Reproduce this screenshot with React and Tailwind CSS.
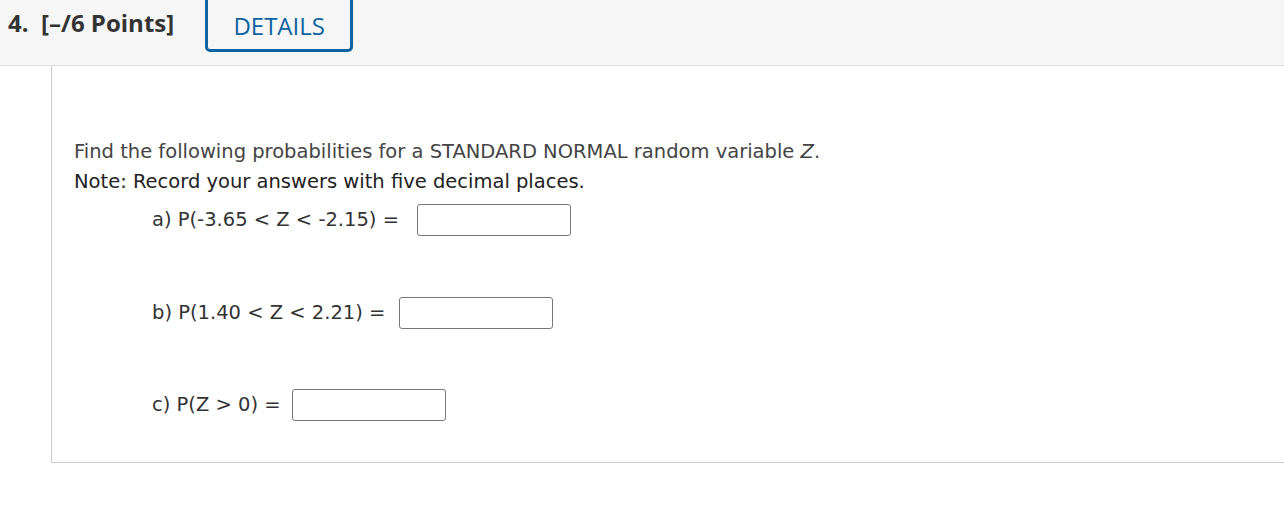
import React from "react";

const rows = [
  { label: "a) P(-3.65 < Z < -2.15) =", gap: "mt-[7px] gap-[18px]" },
  { label: "b) P(1.40 < Z < 2.21) =", gap: "mt-[61px] gap-[14px]" },
  { label: "c) P(Z > 0) =", gap: "mt-[60px] gap-[11px]" },
];

export default function App() {
  return (
    <div className="w-[1284px] h-[510px] bg-white overflow-hidden">
      {/* header bar */}
      <header className="h-[66px] bg-[#f6f6f6] border-b border-[#dcdcdc] flex items-start">
        <h2 className="pl-[8px] pt-[5px] font-['Open_Sans',sans-serif] font-bold text-[24px] text-[#333]">
          4.&nbsp; [–/6 Points]
        </h2>
        <div className="ml-[31px] mt-[-4px] w-[148px] h-[56px] border-[3px] border-[#0e64a0] rounded-b-[5px] flex items-center justify-center pt-[4px]">
          <span className="font-['Open_Sans',sans-serif] text-[24px] text-[#0e64a0]">DETAILS</span>
        </div>
      </header>

      {/* question box */}
      <section className="ml-[51px] h-[397px] border-l border-b border-[#cccccc] pl-[22px] pt-[71px] font-['DejaVu_Sans',Verdana,sans-serif] text-[19.5px]">
        <p className="leading-[30px] text-[#444]">
          Find the following probabilities for a STANDARD NORMAL random variable <i>Z</i>.
        </p>
        <p className="leading-[30px] text-[#222]">Note: Record your answers with five decimal places.</p>
        {rows.map((r) => (
          <div key={r.label} className={`${r.gap} pl-[78px] flex items-center text-[#333]`}>
            <span>{r.label}</span>
            <div className="w-[154px] h-[32px] border border-[#777] rounded-[3px] bg-white" />
          </div>
        ))}
      </section>
    </div>
  );
}
